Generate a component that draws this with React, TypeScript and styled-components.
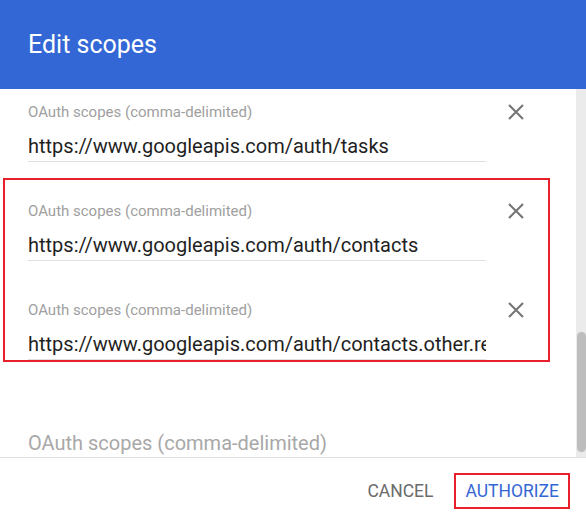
import React from "react";
import styled, { createGlobalStyle } from "styled-components";

const GlobalStyle = createGlobalStyle`
  html, body {
    margin: 0;
    padding: 0;
    background: #ffffff;
    font-family: Roboto, "Noto Sans", Arial, sans-serif;
  }
  * { box-sizing: border-box; }
`;

const LABEL = "OAuth scopes (comma-delimited)";

const CloseIcon = () => (
  <svg width="18" height="18" viewBox="0 0 18 18">
    <path d="M2 2 L16 16 M16 2 L2 16" stroke="#757575" strokeWidth="2.1" fill="none" />
  </svg>
);

type ScopeRowProps = { value?: string; showClose?: boolean };

const ScopeRow = ({ value, showClose = true }: ScopeRowProps) => {
  const empty = !value;
  return (
    <Row>
      <Field>
        <Label>{empty ? "" : LABEL}</Label>
        <Input $empty={empty}>{empty ? LABEL : value}</Input>
      </Field>
      {showClose && (
        <CloseButton>
          <CloseIcon />
        </CloseButton>
      )}
    </Row>
  );
};

const App = () => {
  return (
    <>
      <GlobalStyle />
      <Dialog>
        <Header>
          <Title>Edit scopes</Title>
        </Header>
        <Body>
          <Content>
            <ScopeRow value="https://www.googleapis.com/auth/tasks" />
            <Highlight>
              <ScopeRow value="https://www.googleapis.com/auth/contacts" />
              <ScopeRow value="https://www.googleapis.com/auth/contacts.other.readonly" />
            </Highlight>
            <Spacer />
            <ScopeRow showClose={false} />
          </Content>
          <Scrollbar>
            <Thumb />
          </Scrollbar>
        </Body>
        <Footer>
          <Button>CANCEL</Button>
          <Button $primary>AUTHORIZE</Button>
        </Footer>
      </Dialog>
    </>
  );
};

export default App;

const Dialog = styled.div`
  width: 586px;
  height: 523px;
  display: flex;
  flex-direction: column;
  background: #ffffff;
  overflow: hidden;
`;

const Header = styled.div`
  height: 89px;
  flex-shrink: 0;
  background: #3367d6;
  display: flex;
  align-items: center;
  padding-left: 28px;
`;

const Title = styled.h2`
  margin: 0;
  color: #ffffff;
  font-size: 25px;
  font-weight: 400;
  line-height: 28px;
`;

const Body = styled.div`
  height: 368px;
  flex-shrink: 0;
  display: flex;
  overflow: hidden;
`;

const Content = styled.div`
  flex: 1;
  display: flex;
  flex-direction: column;
  padding-top: 15px;
  overflow: hidden;
`;

const Row = styled.div`
  display: flex;
  align-items: flex-start;
  padding-left: 28px;
  & + & {
    margin-top: 41px;
  }
`;

const Highlight = styled.div`
  margin: 16px 26px 0 3px;
  padding-top: 23px;
  border: 2px solid #e8202a;
  ${Row} {
    padding-left: 23px;
  }
`;

const Spacer = styled.div`
  height: 39px;
  flex-shrink: 0;
`;

const Field = styled.div`
  width: 458px;
  display: flex;
  flex-direction: column;
  gap: 11px;
`;

const Label = styled.div`
  height: 16px;
  font-size: 15px;
  line-height: 16px;
  color: #a0a0a0;
  white-space: nowrap;
`;

const Input = styled.div<{ $empty?: boolean }>`
  height: 31px;
  line-height: 30px;
  font-size: 20px;
  color: ${(p) => (p.$empty ? "#a8a8a8" : "#1f1f1f")};
  border-bottom: 1px solid #e0e0e0;
  white-space: nowrap;
  overflow: hidden;
`;

const CloseButton = styled.div`
  width: 40px;
  height: 32px;
  margin-left: 10px;
  margin-top: -8px;
  display: flex;
  align-items: center;
  justify-content: center;
`;

const Scrollbar = styled.div`
  width: 10px;
  flex-shrink: 0;
  background: #ebebeb;
  padding-top: 243px;
  display: flex;
  flex-direction: column;
  align-items: flex-end;
`;

const Thumb = styled.div`
  width: 9px;
  height: 120px;
  border-radius: 5px;
  background: #bdbdbd;
`;

const Footer = styled.div`
  flex: 1;
  border-top: 1px solid #e0e0e0;
  display: flex;
  justify-content: flex-end;
  align-items: center;
  gap: 10px;
  padding-right: 16px;
`;

const Button = styled.div<{ $primary?: boolean }>`
  font-size: 17.5px;
  font-weight: 400;
  line-height: 20px;
  padding: 6px 9px;
  border: 2px solid ${(p) => (p.$primary ? "#e8202a" : "transparent")};
  color: ${(p) => (p.$primary ? "#3367d6" : "#6b6b6b")};
`;
